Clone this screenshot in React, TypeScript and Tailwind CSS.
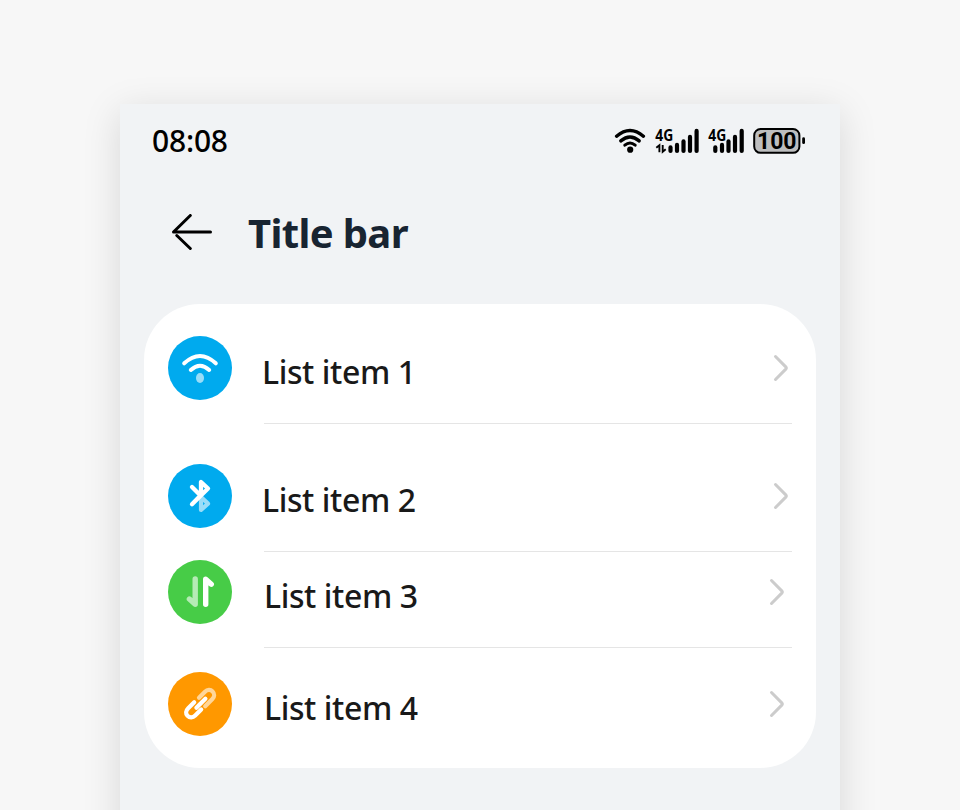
import type { ReactNode } from "react";

const uiFont = "font-['Noto_Sans','Open_Sans',sans-serif]";

function SignalBars({ children, x }: { children?: ReactNode; x: number[] }) {
  const tops = [145.5, 143, 139.5, 135, 129];
  return (
    <>
      {children}
      {x.map((cx, i) => (
        <path
          key={cx}
          d={`M${cx} ${tops[i] + 1.9}V151`}
          stroke="black"
          strokeWidth="4.2"
          strokeLinecap="round"
        />
      ))}
    </>
  );
}

function StatusIcons() {
  return (
    <svg className="block h-8 w-[196px]" viewBox="612 125 196 32" fill="none">
      <g stroke="black" strokeWidth="3.4" strokeLinecap="round">
        <path d="M616.6 136.2Q630 124.6 643.4 136.2" />
        <path d="M620.8 140.9Q630 132.9 639.2 140.9" />
        <path d="M624.8 145.2Q630 140.7 635.2 145.2" strokeWidth="3" />
      </g>
      <circle cx="630.2" cy="149.7" r="3.1" fill="black" />
      <g fontWeight="700" fill="black" className={uiFont}>
        <text x="655.2" y="140.7" fontSize="16" textLength="18" lengthAdjust="spacingAndGlyphs">4G</text>
        <text x="708.2" y="140.7" fontSize="16" textLength="18" lengthAdjust="spacingAndGlyphs">4G</text>
      </g>
      <SignalBars x={[670.5, 677, 683.5, 690, 696.6]}>
        <path d="M656.3 147.7L659.4 145.2V152.2M662.7 145V151.7L665.7 149.2" stroke="black" strokeWidth="1.9" />
      </SignalBars>
      <SignalBars x={[715.3, 722, 728.5, 735, 741.7]} />
      <rect x="754.2" y="129" width="45.2" height="23.8" rx="6.4" fill="#bdbebf" stroke="black" strokeWidth="2" />
      <path d="M803.6 138.7V142.7" stroke="black" strokeWidth="2.8" strokeLinecap="round" />
      <text x="757" y="149.2" fontSize="23" fontWeight="700" fill="black" textLength="39.5" lengthAdjust="spacingAndGlyphs" className="font-['Roboto','Noto_Sans',sans-serif]">100</text>
    </svg>
  );
}

function Chevron() {
  return (
    <svg className="h-8 w-5 shrink-0" viewBox="0 0 20 32" fill="none" stroke="#cccccc" strokeWidth="3" strokeLinecap="round" strokeLinejoin="round">
      <path d="M3.5 4.5L14 15.1Q14.8 16 14 16.9L3.5 27.5" />
    </svg>
  );
}

function Badge({ color, children }: { color: string; children: ReactNode }) {
  return (
    <svg className="size-16 shrink-0" viewBox="0 0 64 64" fill="none" stroke="white" strokeLinecap="round" strokeLinejoin="round">
      <circle cx="32" cy="32" r="32" fill={color} stroke="none" />
      {children}
    </svg>
  );
}

function WifiBadge() {
  return (
    <Badge color="#00aaee">
      <path d="M16.2 27.3Q32 12.7 47.8 27.3M22.8 34Q32 25.5 41.2 34" strokeWidth="4" />
      <ellipse cx="32" cy="42" rx="4" ry="5" fill="white" fillOpacity=".6" stroke="none" />
    </Badge>
  );
}

function BluetoothBadge() {
  return (
    <Badge color="#00aaee">
      <path d="M33 33V46L40 39.6L33 33Z" stroke="#99ddf8" strokeWidth="4.2" />
      <path d="M24 23L32.5 31.5L24 40.3M24 40.3L40 24.5L33 18V31" strokeWidth="4.3" />
    </Badge>
  );
}

function DataBadge() {
  return (
    <Badge color="#47cc47">
      <path d="M27.2 19V44.3L21.4 39" stroke="#b5ebb5" strokeWidth="5.4" />
      <path d="M37.7 44.3V19.3L43.3 24.2" strokeWidth="5.4" />
    </Badge>
  );
}

function LinkBadge() {
  return (
    <Badge color="#ff9800">
      <path d="M31 25.8L37 19.8C39.3 17.4 42.6 17.4 44.6 19.5C46.7 21.6 46.7 24.7 44.4 27L37.2 34.3" stroke="#ffd699" strokeWidth="4.2" />
      <path d="M26.2 30.2L20.2 36.2C17.7 38.7 17.4 41.6 19.5 43.8C21.7 46 24.8 45.9 27.2 43.5L33.2 37.5M28.4 35.8L37.4 26.8" strokeWidth="4.2" />
    </Badge>
  );
}

const label = `flex-1 whitespace-nowrap text-[32px] leading-[44px] font-medium tracking-[-0.4px] text-[#191919] pt-[7px] ${uiFont}`;

export default function App() {
  return (
    <div className="h-[810px] w-[960px] overflow-hidden bg-[#f7f7f7] px-[120px] pt-[104px]">
      <main className={`h-[1400px] bg-[#f1f3f5] px-6 shadow-[0_8px_36px_rgba(0,0,0,0.13)] ${uiFont}`}>
        <header className="flex h-[74px] items-center justify-between px-2">
          <span className="text-[30px] leading-9 font-medium tracking-[-0.2px] text-black">08:08</span>
          <StatusIcons />
        </header>
        <div className="flex h-[126px] items-start gap-9 pt-[30px] pl-7">
          <svg className="mt-1.5 h-10 w-10" viewBox="0 0 40 40" fill="none" stroke="black" strokeWidth="3" strokeLinecap="round" strokeLinejoin="round">
            <path d="M38.5 18H1.5L18.3 1.5M4.8 21.5L18.3 34.5" />
          </svg>
          <h1 className="pt-px text-[40px] leading-[48px] font-bold tracking-[-0.65px] text-[#182431]">Title bar</h1>
        </div>
        <section className="h-[464px] rounded-[56px] bg-white px-6">
          <div className="flex h-[120px] pt-8">
            <WifiBadge />
            <div className="ml-8 flex h-[88px] flex-1 items-start border-b border-[#e5e5e5]">
              <div className="-ml-0.5 flex h-16 flex-1 items-center">
                <span className={label}>List item 1</span>
                <Chevron />
              </div>
            </div>
          </div>
          <div className="flex h-32 pt-10">
            <BluetoothBadge />
            <div className="ml-8 flex h-[88px] flex-1 items-start border-b border-[#e5e5e5]">
              <div className="-ml-0.5 flex h-16 flex-1 items-center">
                <span className={label}>List item 2</span>
                <Chevron />
              </div>
            </div>
          </div>
          <div className="flex h-24 pt-2">
            <DataBadge />
            <div className="ml-8 flex h-[88px] flex-1 items-start border-b border-[#e5e5e5]">
              <div className="flex h-16 flex-1 items-center pr-1">
                <span className={label}>List item 3</span>
                <Chevron />
              </div>
            </div>
          </div>
          <div className="flex h-[120px] pt-6">
            <LinkBadge />
            <div className="ml-8 flex h-16 flex-1 items-center pr-1">
              <span className={label}>List item 4</span>
              <Chevron />
            </div>
          </div>
        </section>
      </main>
    </div>
  );
}
